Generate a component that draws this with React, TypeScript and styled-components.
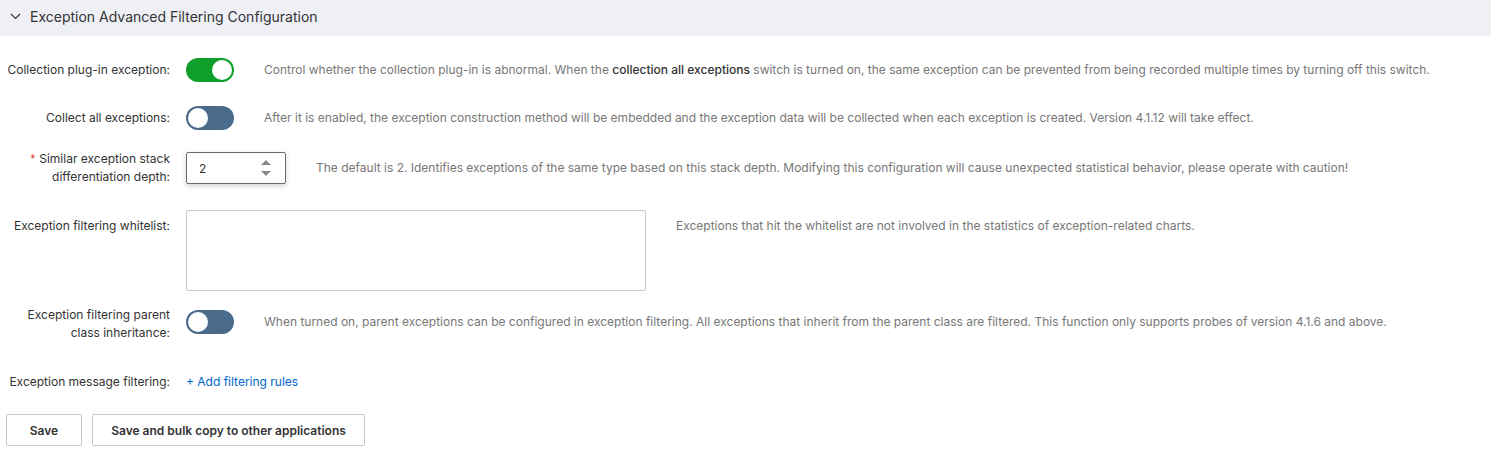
import React from "react";
import styled, { createGlobalStyle } from "styled-components";

const Global = createGlobalStyle`
  html, body { margin: 0; padding: 0; background: #ffffff; }
  body { font-family: Inter, "Noto Sans", sans-serif; -webkit-font-smoothing: antialiased; }
  * { box-sizing: border-box; }
`;

const Page = styled.div`
  width: 1491px;
  height: 453px;
  background: #fff;
`;

const Header = styled.div`
  height: 36px;
  background: #eef0f6;
  display: flex;
  align-items: center;
  padding-left: 10px;
  padding-bottom: 4px;
  gap: 9px;
  color: #333;
  font-size: 14px;
`;

const Form = styled.div`
  display: flex;
  flex-direction: column;
  padding-top: 18px;
`;

const Row = styled.div<{ $mt?: number }>`
  display: flex;
  align-items: flex-start;
  margin-top: ${(p) => p.$mt ?? 0}px;
`;

const Label = styled.div<{ $multi?: boolean }>`
  width: 170px;
  flex: none;
  text-align: right;
  white-space: nowrap;
  font-size: 12px;
  color: #333;
  line-height: ${(p) => (p.$multi ? "18px" : "32px")};
  min-height: 32px;
`;

const Req = styled.span`
  color: #d93026;
  margin-right: 4px;
  font-family: "Liberation Sans", sans-serif;
`;

const Control = styled.div<{ $h?: number }>`
  margin-left: 16px;
  height: ${(p) => p.$h ?? 32}px;
  display: flex;
  align-items: center;
  flex: none;
`;

const Desc = styled.div<{ $lh?: number }>`
  margin-left: 30px;
  line-height: ${(p) => p.$lh ?? 32}px;
  font-size: 12px;
  color: #777;
  white-space: nowrap;
`;

const Strong = styled.span`
  color: #333;
  font-weight: 500;
`;

const Track = styled.div<{ $on?: boolean }>`
  width: 48px;
  height: 24px;
  border-radius: 12px;
  background: ${(p) => (p.$on ? "#119f2b" : "#4a6a8c")};
  position: relative;
`;

const Knob = styled.div<{ $on?: boolean }>`
  position: absolute;
  top: 2px;
  left: ${(p) => (p.$on ? "26px" : "2px")};
  width: 20px;
  height: 20px;
  border-radius: 50%;
  background: #fff;
`;

const NumberBox = styled.div`
  width: 100px;
  height: 32px;
  border: 1px solid #6b6b6b;
  border-radius: 2px;
  box-shadow: 0 2px 5px rgba(0, 0, 0, 0.18);
  display: flex;
  align-items: center;
  justify-content: space-between;
  padding: 0 14px 0 12px;
  font-size: 12px;
  color: #333;
  background: #fff;
`;

const Arrows = styled.div`
  display: flex;
  flex-direction: column;
  gap: 6px;
`;

const TextArea = styled.div`
  width: 460px;
  height: 81px;
  border: 1px solid #c4c8ce;
  border-radius: 2px;
  background: #fff;
`;

const Link = styled.a`
  font-size: 12px;
  color: #0064c8;
  line-height: 32px;
  text-decoration: none;
`;

const Buttons = styled.div`
  display: flex;
  gap: 10px;
  padding-left: 6px;
  margin-top: 16px;
`;

const Button = styled.button<{ $w: number }>`
  width: ${(p) => p.$w}px;
  height: 32px;
  border: 1px solid #c4c8ce;
  border-radius: 2px;
  background: #fff;
  font-family: Inter, "Noto Sans", sans-serif;
  font-size: 12px;
  font-weight: 600;
  color: #333;
  padding: 0;
`;

const Switch = ({ on }: { on?: boolean }) => (
  <Track $on={on}>
    <Knob $on={on} />
  </Track>
);

export default function App() {
  return (
    <Page>
      <Global />
      <Header>
        <svg width="11" height="7" viewBox="0 0 11 7">
          <path d="M1 1l4.5 4.5L10 1" fill="none" stroke="#333" strokeWidth="1.2" />
        </svg>
        Exception Advanced Filtering Configuration
      </Header>
      <Form>
        <Row>
          <Label>Collection plug-in exception:</Label>
          <Control>
            <Switch on />
          </Control>
          <Desc>
            Control whether the collection plug-in is abnormal. When the <Strong>collection all exceptions</Strong> switch is turned on, the same exception can be prevented from being recorded multiple times by turning off this switch.
          </Desc>
        </Row>
        <Row $mt={16}>
          <Label>Collect all exceptions:</Label>
          <Control>
            <Switch />
          </Control>
          <Desc>
            After it is enabled, the exception construction method will be embedded and the exception data will be collected when each exception is created. Version 4.1.12 will take effect.
          </Desc>
        </Row>
        <Row $mt={16}>
          <Label $multi>
            <Req>*</Req>Similar exception stack
            <br />
            differentiation depth:
          </Label>
          <Control $h={36}>
            <NumberBox>
              <span>2</span>
              <Arrows>
                <svg width="10" height="5" viewBox="0 0 10 5">
                  <path d="M0 5L5 0L10 5Z" fill="#888" />
                </svg>
                <svg width="10" height="5" viewBox="0 0 10 5">
                  <path d="M0 0L5 5L10 0Z" fill="#888" />
                </svg>
              </Arrows>
            </NumberBox>
          </Control>
          <Desc $lh={36}>
            The default is 2. Identifies exceptions of the same type based on this stack depth. Modifying this configuration will cause unexpected statistical behavior, please operate with caution!
          </Desc>
        </Row>
        <Row $mt={24}>
          <Label>Exception filtering whitelist:</Label>
          <Control $h={81}>
            <TextArea />
          </Control>
          <Desc>Exceptions that hit the whitelist are not involved in the statistics of exception-related charts.</Desc>
        </Row>
        <Row $mt={15}>
          <Label $multi>
            Exception filtering parent
            <br />
            class inheritance:
          </Label>
          <Control>
            <Switch />
          </Control>
          <Desc>
            When turned on, parent exceptions can be configured in exception filtering. All exceptions that inherit from the parent class are filtered. This function only supports probes of version 4.1.6 and above.
          </Desc>
        </Row>
        <Row $mt={24}>
          <Label>Exception message filtering:</Label>
          <Control>
            <Link>+ Add filtering rules</Link>
          </Control>
        </Row>
        <Buttons>
          <Button $w={76}>Save</Button>
          <Button $w={273}>Save and bulk copy to other applications</Button>
        </Buttons>
      </Form>
    </Page>
  );
}
